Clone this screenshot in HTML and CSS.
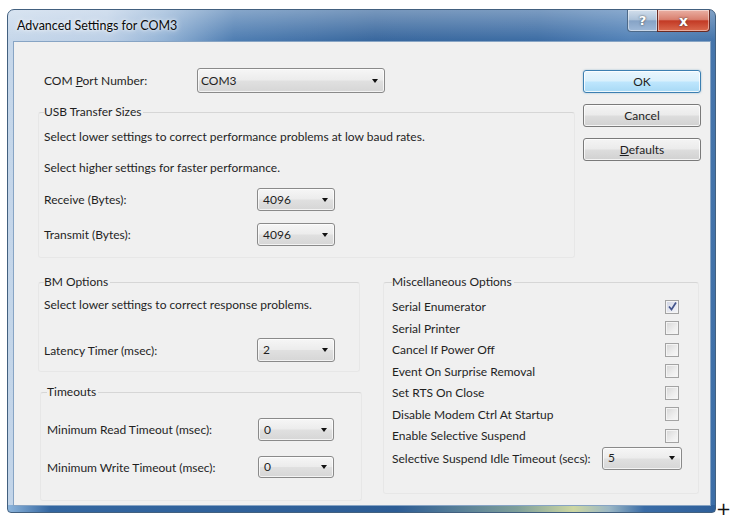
FILE: index.html
```html
<!DOCTYPE html>
<html>
<head>
<meta charset="utf-8">
<title>Advanced Settings for COM3</title>
<link rel="stylesheet" href="styles.css">
</head>
<body>
<div class="page">
  <div class="window">
    <div class="titlebar">
      <span class="title">Advanced Settings for COM3</span>
      <div class="caption-btns">
        <span class="cap help">?</span>
        <span class="cap close">x</span>
      </div>
    </div>
    <div class="client">
      <div class="top">
        <div class="top-left">
          <div class="com-row">
            <span class="com-label">COM <u>P</u>ort Number:</span>
            <div class="combo combo-com"><span class="val">COM3</span><i class="arrow"></i></div>
          </div>
          <fieldset class="group usb">
            <legend>USB Transfer Sizes</legend>
            <p class="note n1">Select lower settings to correct performance problems at low baud rates.</p>
            <p class="note n2">Select higher settings for faster performance.</p>
            <div class="field-row r1"><span class="flabel">Receive (Bytes):</span><div class="combo small"><span class="val">4096</span><i class="arrow"></i></div></div>
            <div class="field-row r2"><span class="flabel">Transmit (Bytes):</span><div class="combo small"><span class="val">4096</span><i class="arrow"></i></div></div>
          </fieldset>
        </div>
        <div class="buttons">
          <button class="btn default">OK</button>
          <button class="btn">Cancel</button>
          <button class="btn"><u>D</u>efaults</button>
        </div>
      </div>
      <div class="bottom">
        <div class="bottom-left">
          <fieldset class="group bm">
            <legend>BM Options</legend>
            <p class="note bm-note">Select lower settings to correct response problems.</p>
            <div class="field-row latency"><span class="flabel">Latency Timer (msec):</span><div class="combo small tall"><span class="val">2</span><i class="arrow"></i></div></div>
          </fieldset>
          <fieldset class="group timeouts">
            <legend>Timeouts</legend>
            <div class="field-row t1"><span class="flabel">Minimum Read Timeout (msec):</span><div class="combo small t"><span class="val">0</span><i class="arrow"></i></div></div>
            <div class="field-row t2"><span class="flabel">Minimum Write Timeout (msec):</span><div class="combo small t"><span class="val">0</span><i class="arrow"></i></div></div>
          </fieldset>
        </div>
        <fieldset class="group misc">
          <legend>Miscellaneous Options</legend>
          <div class="opt first"><span>Serial Enumerator</span><span class="check checked"><svg width="11" height="11" viewBox="0 0 11 11"><path d="M2 5.5 L4.5 8.5 L9 1.5" fill="none" stroke="#44558c" stroke-width="1.7"/></svg></span></div>
          <div class="opt"><span>Serial Printer</span><span class="check"></span></div>
          <div class="opt"><span>Cancel If Power Off</span><span class="check"></span></div>
          <div class="opt"><span>Event On Surprise Removal</span><span class="check"></span></div>
          <div class="opt"><span>Set RTS On Close</span><span class="check"></span></div>
          <div class="opt"><span>Disable Modem Ctrl At Startup</span><span class="check"></span></div>
          <div class="opt"><span>Enable Selective Suspend</span><span class="check"></span></div>
          <div class="opt-combo"><span class="olabel">Selective Suspend Idle Timeout (secs):</span><div class="combo suspend"><span class="val">5</span><i class="arrow"></i></div></div>
        </fieldset>
      </div>
    </div>
  </div>
  <span class="cursor">+</span>
</div>
</body>
</html>
```

FILE: styles.css
```css
html, body {
  margin: 0;
  padding: 0;
  background: #ffffff;
}

body {
  font-family: "Segoe UI", Lato, "Noto Sans", sans-serif;
  font-size: 12px;
  color: #1f1f1f;
}

.page {
  position: relative;
  width: 731px;
  height: 518px;
  overflow: hidden;
}

.window {
  margin: 9px 0 0 7px;
  width: 709px;
  height: 504px;
  box-sizing: border-box;
  border: 1px solid #42607f;
  border-radius: 7px 7px 4px 4px;
  display: flex;
  flex-direction: column;
  background:
    linear-gradient(90deg, #8db5dc 0%, #3366a0 6%, #2d5d95 55%, #7e9f9a 72%, #cdd7a2 80%, #9bb7c5 85%, #3a6ca6 90%, #2f609a 100%) bottom / 100% 7px no-repeat,
    linear-gradient(180deg, rgba(255,255,255,0.35) 0px, rgba(255,255,255,0.05) 30px, rgba(255,255,255,0) 100%),
    linear-gradient(90deg, #c3d5e9 0%, #b9cde5 14%, #8fb0d4 22%, #4677ae 32%, #2f6099 52%, #3466a0 75%, #4a7cb4 88%, #3c6ea7 100%);
}

.titlebar {
  height: 31px;
  display: flex;
  align-items: flex-start;
  justify-content: space-between;
  padding-left: 9px;
}

.title {
  line-height: 31px;
  font-size: 12.5px;
  color: #0a0a0a;
  text-shadow: 0 0 6px rgba(255,255,255,0.9), 0 0 3px rgba(255,255,255,0.8);
}

.caption-btns {
  display: flex;
  margin-right: 5px;
}

.cap {
  height: 22px;
  box-sizing: border-box;
  display: flex;
  align-items: center;
  justify-content: center;
  color: #fff;
  font-family: "DejaVu Sans", sans-serif;
  font-weight: bold;
  font-size: 13px;
  text-shadow: 0 0 2px #333;
  box-shadow: inset 0 0 0 1px rgba(255,255,255,0.45);
}

.help {
  width: 30px;
  border: 1px solid #4d6988;
  border-top: none;
  border-right: none;
  border-radius: 0 0 0 4px;
  background: linear-gradient(180deg, #d3dfec 0%, #aec3da 45%, #86a3c6 52%, #9fb9d8 100%);
}

.close {
  width: 53px;
  border: 1px solid #6b2a22;
  border-top: none;
  border-radius: 0 0 4px 0;
  background: linear-gradient(180deg, #eab0a4 0%, #d9806f 45%, #c33a25 52%, #da6a4e 100%);
  font-size: 14px;
}

.client {
  margin: 0 4px 6px 5px;
  height: 463px;
  border: 1px solid #87a4c4;
  background: #f0f0f0;
  padding: 26px 9px 0 24px;
  box-sizing: content-box;
  overflow: hidden;
}

.top {
  display: flex;
  height: 191px;
}

.top-left {
  width: 537px;
}

.com-row {
  display: flex;
  align-items: center;
  height: 25px;
  padding-left: 6px;
}

.com-label {
  width: 153px;
  flex: none;
}

/* combos */
.combo {
  display: flex;
  align-items: center;
  justify-content: space-between;
  box-sizing: border-box;
  height: 23px;
  border: 1px solid #8a8a8a;
  border-radius: 3px;
  background: linear-gradient(180deg, #f6f6f6 0%, #ececec 48%, #e0e0e0 52%, #d6d6d6 100%);
  box-shadow: inset 0 0 0 1px rgba(255,255,255,0.7);
  padding: 0 6px 0 5px;
  flex: none;
}

.combo .val {
  line-height: 16px;
}

.arrow {
  width: 0;
  height: 0;
  border-left: 3.5px solid transparent;
  border-right: 3.5px solid transparent;
  border-top: 4px solid #111;
}

.combo-com {
  width: 188px;
  height: 25px;
  padding-left: 3px;
  padding-right: 6px;
}

.small {
  width: 78px;
}

.tall {
  height: 24px;
}

.t {
  width: 76px;
}

.suspend {
  width: 80px;
}

/* group boxes */
.group {
  margin: 0;
  border: 1px solid #e7e7e7;
  border-top-color: #d6d6d6;
  border-radius: 3px;
  min-width: 0;
}

.group legend {
  padding: 0 2px 0 0;
  line-height: 14px;
  color: #1f1f1f;
}

.usb {
  margin-top: 12px;
  padding: 0 0 11px 5px;
}

.note {
  margin: 0;
  line-height: 16px;
}

.n1 {
  margin-top: 10px;
}

.n2 {
  margin-top: 15px;
}

.field-row {
  display: flex;
  align-items: center;
}

.flabel {
  flex: none;
  width: 213px;
}

.r1 {
  margin-top: 12px;
}

.r2 {
  margin-top: 12px;
}

/* right buttons */
.buttons {
  margin-left: auto;
  width: 118px;
  padding-top: 2px;
  display: flex;
  flex-direction: column;
  gap: 11px;
}

.btn {
  height: 23px;
  width: 118px;
  font: inherit;
  color: #1f1f1f;
  border: 1px solid #7a7a7a;
  border-radius: 3px;
  background: linear-gradient(180deg, #f4f4f4 0%, #ebebeb 48%, #dddddd 52%, #d1d1d1 100%);
  box-shadow: inset 0 0 0 1px rgba(255,255,255,0.75);
  padding: 0;
}

.btn.default {
  border-color: #3c7fb1;
  background: linear-gradient(180deg, #eaf6fd 0%, #d9f0fc 48%, #bee6fd 52%, #a7d9f5 100%);
  box-shadow: inset 0 0 0 1px rgba(255,255,255,0.8), 0 0 2px rgba(60,127,177,0.5);
}

/* bottom area */
.bottom {
  display: flex;
  align-items: flex-start;
  margin-top: 16px;
}

.bottom-left {
  width: 324px;
  flex: none;
}

.bm {
  margin-right: 2px;
  padding: 0 0 9px 5px;
}

.bm-note {
  margin-top: 8px;
}

.latency {
  margin-top: 25px;
}

.timeouts {
  margin: 13px 0 0 2px;
  padding: 0 0 22px 6px;
}

.timeouts .flabel {
  width: 211px;
}

.t1 {
  margin-top: 19px;
}

.t2 {
  margin-top: 15px;
}

.t2 .combo {
  height: 22px;
}

.misc {
  margin-left: 21px;
  width: 316px;
  box-sizing: border-box;
  padding: 0 19px 23px 8px;
  flex: none;
}

.opt {
  height: 21.5px;
  display: flex;
  align-items: center;
  justify-content: space-between;
}

.opt.first {
  margin-top: 7px;
}

.check {
  width: 14px;
  height: 14px;
  box-sizing: border-box;
  border: 1px solid #a3a3a3;
  background: linear-gradient(135deg, #d6d6d6 0%, #eeeeee 60%, #f8f8f8 100%);
  box-shadow: inset 0 0 0 1px #f4f4f4;
  display: flex;
  align-items: center;
  justify-content: center;
}

.check.checked {
  background: linear-gradient(135deg, #d0d4e3 0%, #e8eaf2 60%, #f4f5f9 100%);
}

.check svg {
  display: block;
}

.opt-combo {
  display: flex;
  align-items: center;
  height: 23px;
}

.olabel {
  flex: none;
  width: 210px;
}

.cursor {
  position: absolute;
  left: 716px;
  top: 500px;
  font-family: "DejaVu Sans", sans-serif;
  font-size: 18px;
  line-height: 18px;
  color: #111;
}
```
